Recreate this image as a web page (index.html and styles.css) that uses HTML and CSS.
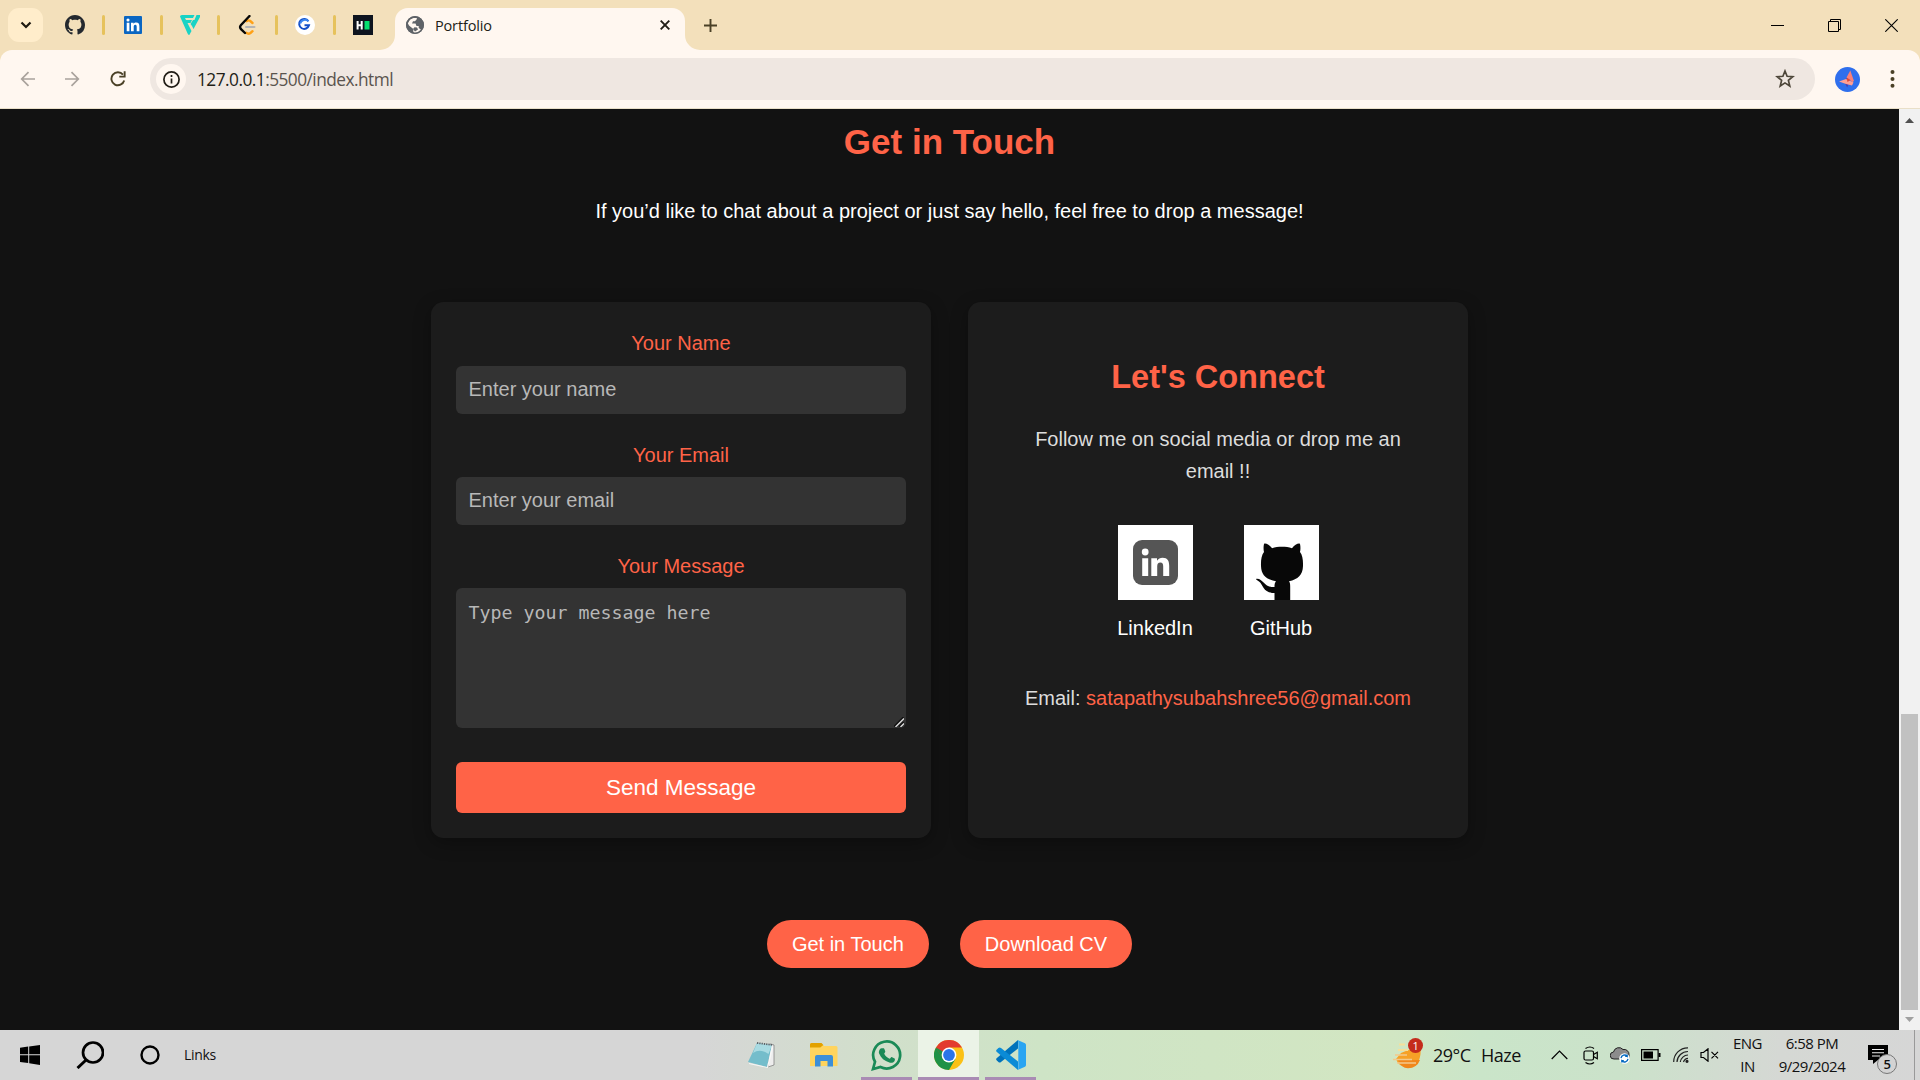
FILE: index.html
```html
<!DOCTYPE html>
<html lang="en">
<head>
<meta charset="utf-8">
<title>Portfolio</title>
<link rel="stylesheet" href="styles.css">
</head>
<body>
<header class="tabstrip">
  <button class="tab-search"><svg width="12" height="8" viewBox="0 0 12 8"><path d="M1.5 1.5 6 6l4.500-4.500" fill="none" stroke="#1f1a10" stroke-width="2.200"/></svg></button>
  <div class="pins">
    <svg class="pin" viewBox="0 0 16 16"><path fill="#24292f" d="M8 0C3.580 0 0 3.580 0 8c0 3.540 2.290 6.530 5.470 7.590.4.070.55-.17.55-.38 0-.19-.01-.82-.01-1.490-2.010.37-2.530-.49-2.690-.94-.09-.23-.48-.94-.82-1.130-.28-.15-.68-.52-.01-.53.63-.01 1.080.58 1.230.82.72 1.210 1.870.87 2.330.66.070-.52.280-.87.510-1.070-1.780-.2-3.640-.89-3.640-3.950 0-.87.310-1.590.820-2.150-.08-.2-.36-1.020.080-2.120 0 0 .67-.21 2.200.82.640-.18 1.320-.27 2-.27s1.360.09 2 .27c1.530-1.040 2.200-.82 2.200-.82.440 1.100.160 1.920.080 2.120.510.560.820 1.270.820 2.150 0 3.070-1.870 3.750-3.650 3.950.290.250.540.730.540 1.480 0 1.070-.01 1.930-.01 2.200 0 .21.150.46.550.38A8.010 8.010 0 0 0 16 8c0-4.420-3.580-8-8-8z"/></svg>
    <i class="sep"></i>
    <svg class="pin" viewBox="0 0 20 20"><rect x="1" y="1" width="18" height="18" rx="1" fill="#0a66c2"/><path fill="#fff" d="M3.700 7.800h2.700v8.500H3.700zM8 7.800h2.600v1.100c.5-.8 1.400-1.300 2.600-1.300 2.500 0 3.200 1.600 3.200 4v4.700h-2.700v-4.200c0-1.200-.1-2.300-1.400-2.300-1.400 0-1.600 1.100-1.600 2.300v4.200H8z"/><circle cx="5" cy="5" r="1.550" fill="#fff"/></svg>
    <i class="sep"></i>
    <svg class="pin" viewBox="0 0 20 20"><path d="M0 1.500Q0 0 2 0h12.500L13 3H5l1 2h6l-1.500 3H7.500l4 8-2.200 4q-1 0-1.600-1.300zM16.500 0H20v2l-6.500 12-1.500-3zM13 5h2l-3 6-1.500-2z" fill="#19d3c5"/></svg>
    <i class="sep"></i>
    <svg class="pin" viewBox="0 0 20 20" fill="none" stroke-linecap="round" stroke-width="2.400"><path d="M14.500 8 12 5.800q-1.600-1-3.200.4M14.500 16.200 12.500 18q-2.200 1.500-4.300-.3" stroke="#ffa116"/><path d="M8 12h8.500" stroke="#b3b3b3" stroke-width="2"/><path d="M11.500 1 3 10q-1.800 2 0 4.200L7 18" stroke="#070706"/></svg>
    <i class="sep"></i>
    <svg class="pin" viewBox="0 0 20 20"><circle cx="10" cy="10" r="10" fill="#fff"/><path d="M13.400 6.200A5 5 0 1 0 14 10.300H9.500" fill="none" stroke="#1450c8" stroke-width="2"/><path d="M5.200 8.500a5 5 0 0 1 8.200-2.300" fill="none" stroke="#3a86ef" stroke-width="2"/></svg>
    <i class="sep"></i>
    <svg class="pin" viewBox="0 0 20 20"><path fill="#0e141e" d="M0 0h20v20H0z"/><path d="M4.600 6v8.500M8.700 6v8.500M5 10.200h3.500" stroke="#fff" stroke-width="2"/><path fill="#05e070" d="M11.500 6h5v8.500h-5z"/></svg>
  </div>
  <svg class="flare left" width="15" height="15"><path d="M0 15A15 15 0 0 0 15 0V15Z" fill="#fff7f0"/></svg>
  <div class="tab">
    <svg width="18" height="18" viewBox="0 0 18 18"><circle cx="9" cy="9" r="9" fill="#5f6368"/><path d="M7.500 2h3.300v1.500l-2 1.800H7L6 7.500h3.500l1 2.500h2.200v2l2.800 2-1.700 1.800-5 1.700-1.500-1.500v-3L3 9.500 1.800 7.300 4 3.500z" fill="#fff7f0"/><path d="M10.500 3.500 13 3l3.500 5-2.500 1.500-2.500-2zM8.500 11.200l2.500.4 1 2-3 1.800-2-2.400z" fill="#5f6368"/><circle cx="9" cy="9" r="8.200" fill="none" stroke="#5f6368" stroke-width="1.600"/></svg>
    <span class="tab-title">Portfolio</span>
    <svg class="tab-close" width="10" height="10" viewBox="0 0 10 10"><path d="m.7.7 8.600 8.600m0-8.600L.7 9.300" stroke="#211d16" stroke-width="1.900"/></svg>
  </div>
  <svg class="flare" width="15" height="15"><path d="M15 15A15 15 0 0 1 0 0V15Z" fill="#fff7f0"/></svg>
  <svg class="newtab" width="13" height="13"><path d="M6.500 0v13M0 6.500h13" stroke="#4a4026" stroke-width="1.900"/></svg>
  <div class="winbtns">
    <svg width="13" height="14"><path d="M0 7.500h13" stroke="#000"/></svg>
    <svg width="13" height="13"><path d="M.5 2.500h10v10H.5zM2.500 2.500v-2h10v10h-2" fill="none" stroke="#000"/></svg>
    <svg width="13" height="13"><path d="m.3.3 12.400 12.400m0-12.400L.3 12.700" stroke="#000" stroke-width="1.100"/></svg>
  </div>
</header>
<div class="toolbar-wrap">
<nav class="toolbar">
  <svg class="back" width="16" height="16"><path d="M15 8H2M8.500 1.200 1.700 8l6.800 6.800" fill="none" stroke="#a9a29c" stroke-width="1.700"/></svg>
  <svg class="fwd" width="16" height="16"><path d="M1 8h13M7.500 1.200 14.300 8l-6.800 6.800" fill="none" stroke="#a9a29c" stroke-width="1.700"/></svg>
  <svg class="reload" width="16" height="16"><path d="M14.200 9.500A6.500 6.500 0 1 1 13 3.700" fill="none" stroke="#4a4026" stroke-width="1.900"/><path d="M15.600.3v6.200H9.300V4.700h4.400V.3z" fill="#4a4026"/></svg>
  <div class="omnibox">
    <span class="info"><svg width="17" height="17"><circle cx="8.500" cy="8.500" r="7.600" fill="none" stroke="#211d16" stroke-width="1.700"/><path d="M8.500 7.500v5M8.500 4v2" stroke="#211d16" stroke-width="1.700"/></svg></span>
    <span class="url">127.0.0.1<span class="path">:5500/index.html</span></span>
    <svg class="star" width="20" height="20" viewBox="0 0 20 20"><path d="m10 2 2.100 5.300 5.700.4-4.400 3.700 1.400 5.600-4.800-3.100L5.200 17l1.400-5.600-4.400-3.700 5.700-.4z" fill="none" stroke="#4e473a" stroke-width="1.700"/></svg>
  </div>
  <svg class="avatar" width="25" height="25"><circle cx="12.500" cy="12.500" r="12.500" fill="#2f6fed"/><path d="m11 11 3.500 3.500-2.300 6-2-4z" fill="#4b3fae"/><path d="m15.300 3.500 3.500 10-1 2-6.300-5z" fill="#f98078"/><path d="m4 14.500 7-2.500 7.500 3.500-1.500 3-6-1.500z" fill="#ff9f93"/><path d="m11.500 10.500 4 2.500-3 2z" fill="#e54830"/></svg>
  <svg class="menu" width="5" height="20"><g fill="#4a4026"><circle cx="2.500" cy="3" r="2"/><circle cx="2.500" cy="10" r="2"/><circle cx="2.500" cy="16.700" r="2"/></g></svg>
</nav>
</div>
<div class="viewport">
  <main class="page">
    <h2 class="title">Get in Touch</h2>
    <p class="lead">If you’d like to chat about a project or just say hello, feel free to drop a message!</p>
    <section class="cards">
      <form class="card form">
        <label for="name">Your Name</label>
        <input id="name" type="text" placeholder="Enter your name">
        <label class="lower" for="email">Your Email</label>
        <input id="email" type="text" placeholder="Enter your email">
        <label class="lower" for="msg">Your Message</label>
        <div class="area">
          <textarea id="msg" placeholder="Type your message here"></textarea>
          <svg class="grip" width="10" height="10"><path d="M0 9.500 9.500 0M5 9.500 9.500 5" stroke="#111" stroke-width="1.500"/><path d="M1.500 10 10 1.500M6.500 10 10 6.500" stroke="#ddd" stroke-width="1.300"/></svg>
        </div>
        <button class="send" type="button">Send Message</button>
      </form>
      <div class="card connect">
        <h2>Let's Connect</h2>
        <p>Follow me on social media or drop me an email !!</p>
        <div class="socials">
          <a><svg width="75" height="75"><path fill="#fff" d="M0 0h75v75H0z"/><rect x="15" y="15" width="45" height="45" rx="9" fill="#555"/><circle cx="27.200" cy="27" r="3.400" fill="#fff"/><path d="M24.200 33.300h6V51h-6zM33.300 33.300H39v2.400c1.300-2 3.200-3 5.600-3 5 0 6.600 3.200 6.600 8V51h-6v-9.500c0-2.500-.7-4-2.800-4-2.300 0-3.200 1.600-3.200 4V51h-5.900z" fill="#fff"/></svg><span>LinkedIn</span></a>
          <a><svg width="75" height="75"><path fill="#fff" d="M0 0h75v75H0z"/><path fill="#080808" d="M20 19c1-1.500 5.500 1 8 4.200 6-1.900 14-1.900 20 0C50.500 20 55 17.500 56 19c.7 3 .5 6 0 8 2.500 3 3.200 8 3 14-.3 9-5 13.500-14 15.200 1 1.300 1.200 3 1.200 5V75H30.500v-7C19 68 19.500 60 15 56.500c-2-1.500-4-2.500-2.500-2.800 7-.5 7 9 18 8.300 0-2.200.2-4.500 1.500-5.800C22 54.500 17.300 50 17 41c-.2-6 .5-11 3-14-.5-2-.7-5 0-8z"/></svg><span>GitHub</span></a>
        </div>
        <p class="mail">Email: <a>satapathysubahshree56@gmail.com</a></p>
      </div>
    </section>
    <div class="actions"><a>Get in Touch</a><a>Download CV</a></div>
  </main>
  <aside class="scrollbar">
    <svg width="9" height="5"><path d="M0 5 4.500 0 9 5z" fill="#505050"/></svg>
    <div class="thumb"></div>
    <svg width="9" height="5"><path d="M0 0h9L4.500 5z" fill="#a0a0a0"/></svg>
  </aside>
</div>
<footer class="taskbar">
  <div class="start">
    <svg width="20" height="20"><path d="M0 2.800 8.200 1.600V9.200H0zM9.200 1.500 20 0V9.200H9.200zM0 10.200h8.200v7.700L0 16.900zM9.200 10.200H20V20L9.200 18.300z"/></svg>
    <svg width="28" height="28"><circle cx="17" cy="11.500" r="10" fill="none" stroke="#000" stroke-width="2.700"/><path d="m10 19-8.500 8" stroke="#000" stroke-width="3"/></svg>
    <svg width="20" height="20"><circle cx="10" cy="10" r="8.500" fill="none" stroke="#000" stroke-width="2.400"/></svg>
    <span class="links">Links</span>
  </div>
  <div class="apps">
    <span class="app pad"><svg width="30" height="30"><path d="m24 4 4 1v20l-6 2z" fill="#ededed" stroke="#777" stroke-width=".7"/><path d="m11 3 15 2-5 22L2 22z" fill="#74bdcb"/><path d="m11 3 15 2-3.500 9Q14 8 7 13z" fill="#a9dbe2"/><path d="m26 5-5 22-18-4v1l19 4 5-20z" fill="#f7f7f7"/><path d="m11 3 16 2" stroke="#5d6267" stroke-width="1.800" stroke-dasharray="1.300 1"/></svg></span>
    <span class="app folder"><svg width="28" height="24"><path d="M0 1.500Q0 0 1.500 0h10L14 3H26q1.500 0 1.500 1.500V23H0z" fill="#ffd45e"/><path d="M0 1.500Q0 0 1.500 0h10l1.800 2-3 2.500H0z" fill="#e2a100"/><path d="M5 23.500V14q0-2 2-2h14q2 0 2 2v9.500h-5.500V18h-7v5.500z" fill="#3d8fd8"/></svg></span>
    <span class="app run"><svg width="31" height="31"><path d="M2 29 4 21.800A13.500 13.500 0 1 1 9.500 27z" fill="none" stroke="#1a8a57" stroke-width="2.700"/><path d="M10.500 8.200h2c.5 0 .8.400 1.800 3.300.2.600-1.300 2-1.100 2.300 1.300 2.400 3 4 5.300 4.900.6.200 1.500-2 2.100-1.800l3 1.500c.6.300.3 1.800 0 2.500-.9 1.800-3.500 2.300-5.200 1.700-5-1.500-8.500-4.500-10.300-9-.7-2 .6-5.400 2.400-5.400z" fill="#1a8a57"/></svg></span>
    <span class="app run chrome"><svg width="30" height="30" viewBox="0 0 30 30"><circle cx="15" cy="15" r="15" fill="#fbc116"/><path d="M2 7.500A15 15 0 0 0 15 30l6.500-11.300L15 15z" fill="#1f9246"/><path d="M2 7.500A15 15 0 0 1 28 7.500H15l-6.500 11z" fill="#e33b2e"/><path d="M2 7.500 8.500 18.700 15 15z" fill="#1f9246"/><circle cx="15" cy="15" r="7.400" fill="#fff"/><circle cx="15" cy="15" r="5.900" fill="#2b74e8"/></svg></span>
    <span class="app run"><svg width="30" height="30"><path d="M22 0v8.500L5 22q-1.300 1-2.600 0L.6 20.300q-1-1 0-2z" fill="#0072bb"/><path d="M22 30V21.500L5 8q-1.300-1-2.600 0L.6 9.700q-1 1 0 2z" fill="#0b8bd6"/><path d="M21.500 0 29 3.300q1 .5 1 1.700v20q0 1.200-1 1.700L21.500 30q1.200-1 .8-3V3q.2-2-.8-3z" fill="#2aa5f2"/></svg></span>
  </div>
  <div class="tray">
    <div class="weather"><svg width="30" height="28" viewBox="0 0 30 28"><path d="M8 12q8-4 19-5 1 3 .5 6-1.500 13-12.500 13.500Q5.500 26 3 18z" fill="#f6a126"/><path d="M5 19h22q-3 8-12 8.300Q8 27 5 19z" fill="#f0871c"/><path d="M6 3.500h6M5 9h10" stroke="#f6df9a" stroke-width="2"/><path d="M2 14h12M0 18.500h19M4 22h19" stroke="#f3c98a" stroke-width="1.600"/></svg><b class="alert">1</b></div>
    <span class="temp">29°C</span><span class="haze">Haze</span>
    <svg class="caret" width="17" height="10"><path d="m.7 9 7.800-8 7.800 8" fill="none" stroke="#000" stroke-width="1.200"/></svg>
    <svg class="cam" width="16" height="19" fill="none" stroke="#000" stroke-width="1.200"><rect x="1" y="5" width="9.500" height="9" rx="1.500"/><path d="m10.500 8.500 3.800-2.300v6.600l-3.800-2.300M2.500 2.500q4.500-3 8.500 0M2.500 16.500q4.500 3 8.500 0"/></svg>
    <svg class="cloud" width="20" height="18"><path d="M4 13a3.500 3.500 0 0 1-.5-7A5.500 5.500 0 0 1 13 3.500 5 5 0 0 1 19 9v4z" fill="#8c8c8c" stroke="#222"/><circle cx="14.500" cy="12.500" r="5.300" fill="#fff"/><path d="M11 12.200a3.600 3.600 0 0 1 6.200-2v-1.700m0 1.900h-2M18 12.800a3.600 3.600 0 0 1-6.200 2v1.700m0-1.900h2" fill="none" stroke="#0067c0" stroke-width="1.300"/></svg>
    <svg class="batt" width="20" height="12"><path d="M.6.600h16.500v10.800H.600z" fill="none" stroke="#000" stroke-width="1.200"/><path d="M2.500 2.500h9.500v7H2.500zM17.500 4h2v4h-2z"/></svg>
    <svg class="wifi" width="16" height="16" fill="none" stroke="#222" stroke-width="1.200"><path d="M.7 15A14 14 0 0 1 15 .8M4 15A11 11 0 0 1 15 4.500M7.300 15A8 8 0 0 1 15 8M10.500 15a5 5 0 0 1 4.500-3.700"/><circle cx="14" cy="14.300" r="1" fill="#000"/></svg>
    <svg class="vol" width="19" height="14" fill="none" stroke="#000" stroke-width="1.200"><path d="M1 4.500h2.500L8 .8v12.400L3.500 9.500H1zM11.500 3.800l6.500 6.500m0-6.500-6.500 6.500"/></svg>
    <div class="stack lang"><span>ENG</span><span>IN</span></div>
    <div class="stack clock"><span>6:58 PM</span><span>9/29/2024</span></div>
    <div class="notif"><svg width="20" height="20"><path d="M0 0h20v15H10l-5 4v-4H0z"/><path d="M4 4.500h12M4 7.800h12M4 11h8" stroke="#eee" stroke-width="1.100"/></svg><b class="count">5</b></div>
    <i class="peek"></i>
  </div>
</footer>
</body>
</html>
```
FILE: styles.css
```css
* { box-sizing: border-box; }
html, body { height: 100%; overflow: hidden; }
body {
  margin: 0;
  display: flex;
  flex-direction: column;
  background: #121212;
  font-family: "Liberation Sans", Arial, sans-serif;
}
svg { display: block; flex: none; }
h2, p { margin: 0; }
button { border: 0; padding: 0; }

/* Browser chrome */
.tabstrip {
  height: 50px;
  flex: none;
  display: flex;
  align-items: center;
  background: #f3e0bb;
  padding-left: 8px;
  font-family: "Open Sans", "Noto Sans", sans-serif;
}
.tab-search {
  width: 35px;
  height: 34px;
  border-radius: 11px;
  background: #ffedcb;
  display: grid;
  place-items: center;
}
.pins { display: flex; align-items: center; margin-left: 22px; }
.pin { width: 20px; height: 20px; }
.sep { width: 3px; height: 20px; margin: 0 17.300px; border-radius: 2px; background: #e6c25c; }
.flare { align-self: flex-end; }
.flare.left { margin-left: 7px; }
.tab {
  width: 290px;
  height: 42px;
  align-self: flex-end;
  border-radius: 13px 13px 0 0;
  background: #fff7f0;
  display: flex;
  align-items: center;
  padding: 0 15px 8px 11px;
}
.tab-title { font-size: 14.500px; margin-left: 11px; letter-spacing: -.15px; color: #211d16; }
.tab-close { margin-left: auto; }
.newtab { margin-left: 4px; }
.winbtns { margin-left: auto; display: flex; align-items: center; gap: 44px; padding-right: 22px; }

.toolbar-wrap { flex: none; height: 59px; background: #f3e0bb; }
.toolbar {
  height: 59px;
  display: flex;
  align-items: center;
  background: #fff7f0;
  border-radius: 12px 12px 0 0;
  border-bottom: 1px solid #e9dfc8;
  padding-left: 20px;
}
.fwd { margin-left: 28px; }
.reload { margin-left: 30px; }
.omnibox {
  width: 1665px;
  height: 42px;
  margin-left: 24px;
  border-radius: 21px;
  background: #efe7e1;
  display: flex;
  align-items: center;
  padding: 0 20px 0 6px;
}
.info { width: 30px; height: 30px; border-radius: 50%; background: #fff7f0; display: grid; place-items: center; }
.url { margin-left: 11px; font: 17.300px "Open Sans", "Noto Sans", sans-serif; letter-spacing: -.53px; color: #211d16; }
.path { color: #5a544e; }
.star { margin-left: auto; }
.avatar { margin-left: 20px; }
.menu { margin-left: 30px; }

/* Page */
.viewport { flex: 1; min-height: 0; display: flex; }
.page { flex: 1; display: flex; flex-direction: column; align-items: center; padding-top: 5px; color: #fff; font-size: 20px; line-height: 32px; }
.page h2 { font-size: 35px; line-height: 56px; color: #ff6347; text-align: center; }
.lead { margin-top: 25px; }
.cards { display: flex; gap: 37px; margin-top: 75px; }
.card {
  width: 500px;
  height: 536px;
  padding: 25px;
  border-radius: 12.500px;
  background: #1c1c1c;
  box-shadow: 0 5px 18px rgba(0, 0, 0, .3);
}
.form { display: flex; flex-direction: column; text-align: center; }
.form label { color: #ff6347; height: 32px; margin-bottom: 7px; }
.form .lower { padding-top: 1px; }
.form input, .form textarea {
  display: block;
  width: 100%;
  border: 0;
  border-radius: 6px;
  background: #333;
  padding: 12.500px;
  color: #fff;
  outline: 0;
}
.form input { height: 48px; margin-bottom: 24px; padding: 11px 12.500px 13px; font: 20px "Liberation Sans", Arial, sans-serif; }
.form textarea { height: 140px; resize: none; font: 18.270px/24px "DejaVu Sans Mono", monospace; }
.form ::placeholder { color: #b8b8b8; opacity: 1; }
.area { position: relative; margin-bottom: 34px; }
.grip { position: absolute; right: 2px; bottom: 1px; }
.send { height: 51px; border-radius: 6px; background: #ff6347; color: #fff; font: 22.500px "Liberation Sans", Arial, sans-serif; }
.connect { display: flex; flex-direction: column; align-items: center; padding: 47px 50px; text-align: center; color: #ddd; }
.connect h2 { font-size: 32.500px; line-height: 57px; }
.connect p { margin-top: 17px; }
.socials { display: flex; gap: 51px; margin-top: 38px; color: #fff; }
.socials a { display: flex; flex-direction: column; align-items: center; gap: 12px; width: 75px; }
.connect .mail { margin-top: 38px; }
.mail a { color: #ff6347; }
.actions { display: flex; gap: 31px; margin-top: 82px; }
.actions a { height: 48px; border-radius: 24px; padding: 0 25px; line-height: 48px; background: #ff6347; }

.scrollbar { width: 21px; background: #f1f1f1; display: flex; flex-direction: column; align-items: center; padding: 9px 0 8px; }
.thumb { width: 17px; height: 296px; margin: auto 0 7px; background: #c1c1c1; }

/* Taskbar */
.taskbar {
  height: 50px;
  flex: none;
  display: flex;
  background: linear-gradient(90deg, #d6d6d6 0, #d6d6d6 700px, #d1dfcb 880px, #cee4c6 1040px, #d2e6c2 1380px, #cae5c9 1480px, #cbe2ca 1620px, #d5d8d4 1780px, #d6d6d6 1920px);
  font-family: "Open Sans", "Noto Sans", sans-serif;
  color: #111;
}
.start { width: 729px; display: flex; align-items: center; padding-left: 20px; gap: 36px; }
.links { font-size: 14px; letter-spacing: -.3px; margin-left: -12px; position: relative; top: -1px; }
.apps { display: flex; }
.app { width: 51px; height: 50px; margin-right: 6px; display: grid; place-items: center; border-bottom: 3px solid transparent; padding-top: 3px; }
.pad { width: 63px; margin-right: 0; }
.folder { width: 63px; }
.run { border-color: #a98bb4; }
.chrome { width: 61px; background: #ebf3e7; }
.tray { flex: 1; display: flex; align-items: center; padding-left: 351px; font-size: 18px; letter-spacing: -.5px; }
.weather { position: relative; }
.alert {
  position: absolute;
  top: -3px;
  left: 15px;
  width: 15px;
  height: 15px;
  border-radius: 50%;
  background: #c42b1c;
  color: #fff;
  font-size: 11px;
  font-weight: 400;
  line-height: 15px;
  text-align: center;
}
.temp { width: 48px; margin-left: 10px; }
.haze { width: 70px; }
.cam { margin-left: 15px; }
.cloud { margin-left: 11px; }
.batt { margin-left: 11px; }
.wifi { margin-left: 12px; }
.vol { margin-left: 11px; }
.stack { display: flex; flex-direction: column; align-items: center; font-size: 15px; line-height: 23px; }
.lang { width: 57px; }
.clock { width: 72px; }
.notif { position: relative; margin-left: 20px; }
.count {
  position: absolute;
  left: 9px;
  top: 9px;
  width: 20px;
  height: 20px;
  border: 1px solid #777;
  border-radius: 50%;
  background: #d3d3d3;
  font-size: 13px;
  font-weight: 600;
  line-height: 18px;
  text-align: center;
}
.peek { width: 1px; height: 50px; margin-left: auto; margin-right: 5px; background: #999; }
```
